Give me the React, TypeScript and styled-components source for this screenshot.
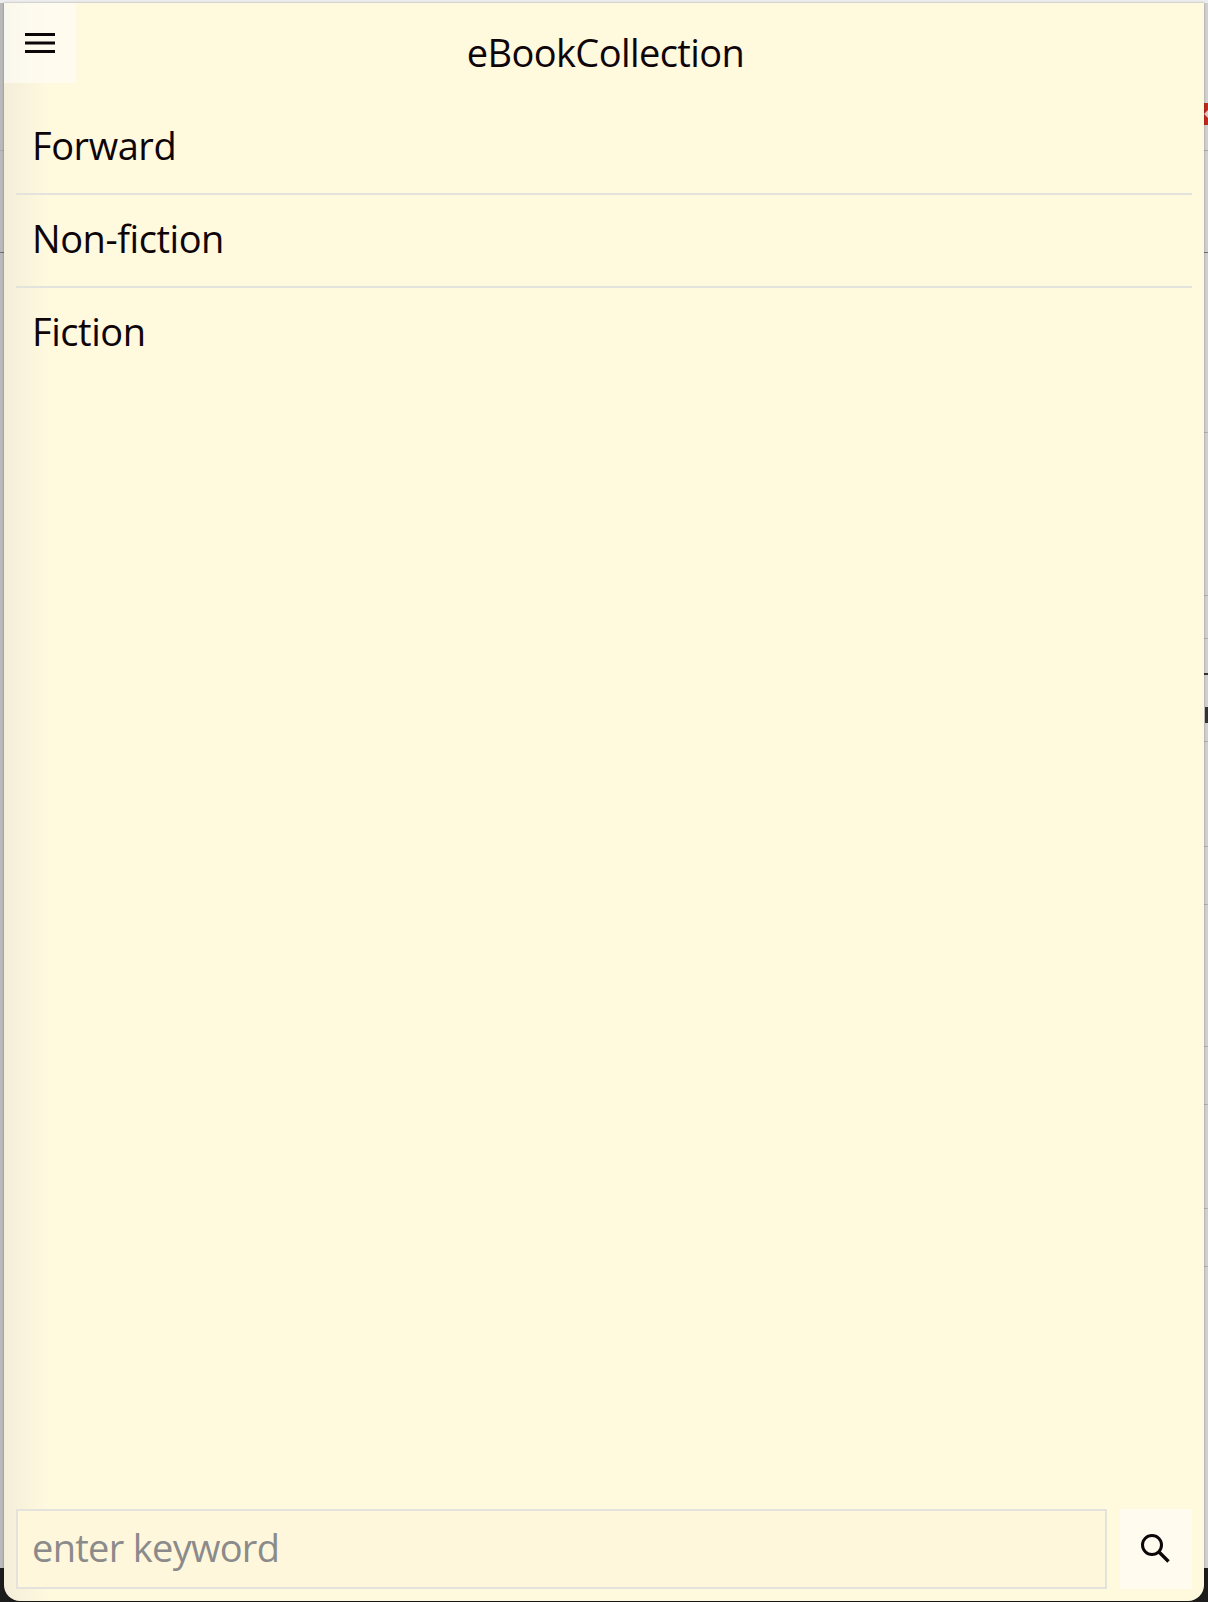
import React from 'react';
import styled, { createGlobalStyle } from 'styled-components';

interface mark {
    height: number; // row height, the mark sits on the bottom of the row
    width: string;
    size: number;
    color: string;
}

// what shows of the page behind the drawer, top to bottom
const topMarks: mark[] = [
    { height: 26, width: "100%", size: 1, color: "#a9a9a9" },
    { height: 102, width: "100%", size: 1, color: "#707070" },
    { height: 180, width: "4px", size: 1, color: "#b0b0b0" },
    { height: 163, width: "4px", size: 1, color: "#b0b0b0" },
    { height: 43, width: "4px", size: 1, color: "#b0b0b0" },
    { height: 36, width: "4px", size: 2, color: "#333" },
    { height: 48, width: "3px", size: 16, color: "#333" },
    { height: 19, width: "4px", size: 1, color: "#b0b0b0" },
    { height: 105, width: "4px", size: 1, color: "#b0b0b0" },
    { height: 58, width: "4px", size: 1, color: "#b0b0b0" },
    { height: 142, width: "4px", size: 1, color: "#b0b0b0" },
    { height: 58, width: "4px", size: 1, color: "#b0b0b0" },
    { height: 104, width: "4px", size: 1, color: "#b0b0b0" },
    { height: 58, width: "4px", size: 1, color: "#b0b0b0" },
];

const GlobalStyle = createGlobalStyle`
    html, body {
        margin: 0;
        padding: 0;
        background: #cfcfcf;
    }
    body {
        font-family: "Open Sans", "Liberation Sans", sans-serif;
    }
`;

const App: React.FC = () => {
    return (
        <Page>
            <GlobalStyle />
            <Backdrop>
                <TopStrip />
                <BackRow $height={122}>
                    <RedMark />
                </BackRow>
                {topMarks.map((m, index) => (
                    <BackRow key={index} $height={m.height}>
                        <BackMark $width={m.width} $size={m.size} $color={m.color} />
                    </BackRow>
                ))}
                <Footer />
            </Backdrop>
            <Drawer>
                <Header>
                    <IconButton aria-label="menu">
                        <svg width="30" height="20" viewBox="0 0 30 20">
                            <path d="M0 0h30v3H0zM0 8.5h30v3H0zM0 17h30v3H0z" fill="#0e0509" />
                        </svg>
                    </IconButton>
                    <Title>eBookCollection</Title>
                </Header>
                <Menu>
                    <MenuItem>Forward</MenuItem>
                    <MenuItem>Non-fiction</MenuItem>
                    <MenuItem>Fiction</MenuItem>
                </Menu>
                <SearchBar>
                    <SearchInput placeholder="enter keyword" />
                    <IconButton aria-label="search">
                        <svg width="30" height="30" viewBox="0 0 30 30" fill="none" stroke="#0e0509">
                            <circle cx="11" cy="11" r="9.5" strokeWidth="3" />
                            <path d="M18 18l9.5 9.5" strokeWidth="3.4" />
                        </svg>
                    </IconButton>
                </SearchBar>
            </Drawer>
        </Page>
    );
};
export default App;

const Page = styled.div`
    position: relative;
    width: 1208px;
    height: 1602px;
    overflow: hidden;
`;

const Backdrop = styled.div`
    height: 100%;
    display: flex;
    flex-direction: column;
    background: linear-gradient(to right, #b9b9b9 0, #b9b9b9 4px, #d0d0d0 4px);
`;

const TopStrip = styled.div`
    height: 3px;
    flex-shrink: 0;
    background: #ececec;
`;

const BackRow = styled.div<{ $height: number }>`
    height: ${(props) => props.$height}px;
    flex-shrink: 0;
    display: flex;
    justify-content: flex-end;
    align-items: flex-end;
`;

const BackMark = styled.div<{ $width: string; $size: number; $color: string }>`
    width: ${(props) => props.$width};
    height: ${(props) => props.$size}px;
    background: ${(props) => props.$color};
`;

const RedMark = styled.div`
    position: relative;
    width: 4px;
    height: 22px;
    background: #c0271d;

    &::after {
        content: "";
        position: absolute;
        right: 0;
        top: 7px;
        border: 4px solid transparent;
        border-right: 4px solid #d8c8c4;
        border-left: 0;
    }
`;

const Footer = styled.div`
    margin-top: auto;
    height: 34px;
    background: #1c1c1c;
`;

const Drawer = styled.div`
    position: absolute;
    left: 4px;
    top: 3px;
    width: 1200px;
    height: 1598px;
    display: flex;
    flex-direction: column;
    border-radius: 0 0 16px 16px;
    background: linear-gradient(to right, #f4eeda 0, #fff9de 44px);
    box-shadow: 0 0 2px rgba(0, 0, 0, 0.4);
    overflow: hidden;
`;

const Header = styled.div`
    height: 99px;
    flex-shrink: 0;
    display: grid;
    grid-template-columns: 72px 1fr 72px;
    align-items: start;
`;

const IconButton = styled.button`
    width: 72px;
    height: 80px;
    padding: 0;
    border: 0;
    flex-shrink: 0;
    background: rgba(255, 255, 255, 0.5);
    display: flex;
    align-items: center;
    justify-content: center;
`;

const Title = styled.div`
    padding: 24px 0 0 3px;
    text-align: center;
    font-size: 38px;
    line-height: 50px;
    letter-spacing: -0.6px;
    color: #0e0509;
`;

const Menu = styled.div`
    flex: 1;
    padding: 0 12px;
`;

const MenuItem = styled.div`
    height: 93px;
    box-sizing: border-box;
    padding: 0 0 6px 16px;
    display: flex;
    align-items: center;
    font-size: 38px;
    letter-spacing: -0.45px;
    color: #0e0509;
    border-bottom: 2px solid #e4e2dc;

    &:last-child {
        border-bottom: 0;
        padding-bottom: 8px;
    }
`;

const SearchBar = styled.div`
    height: 80px;
    margin: 0 12px 12px;
    display: flex;
    gap: 13px;
    flex-shrink: 0;
`;

const SearchInput = styled.input`
    flex: 1;
    min-width: 0;
    height: 80px;
    box-sizing: border-box;
    padding: 0 14px 4px;
    border: 2px solid #e4e2dc;
    background: #fff7db;
    outline: none;
    font-family: inherit;
    font-size: 38px;
    letter-spacing: -0.7px;
    color: #0e0509;

    &::placeholder {
        color: #8b8b8b;
        opacity: 1;
    }
`;
